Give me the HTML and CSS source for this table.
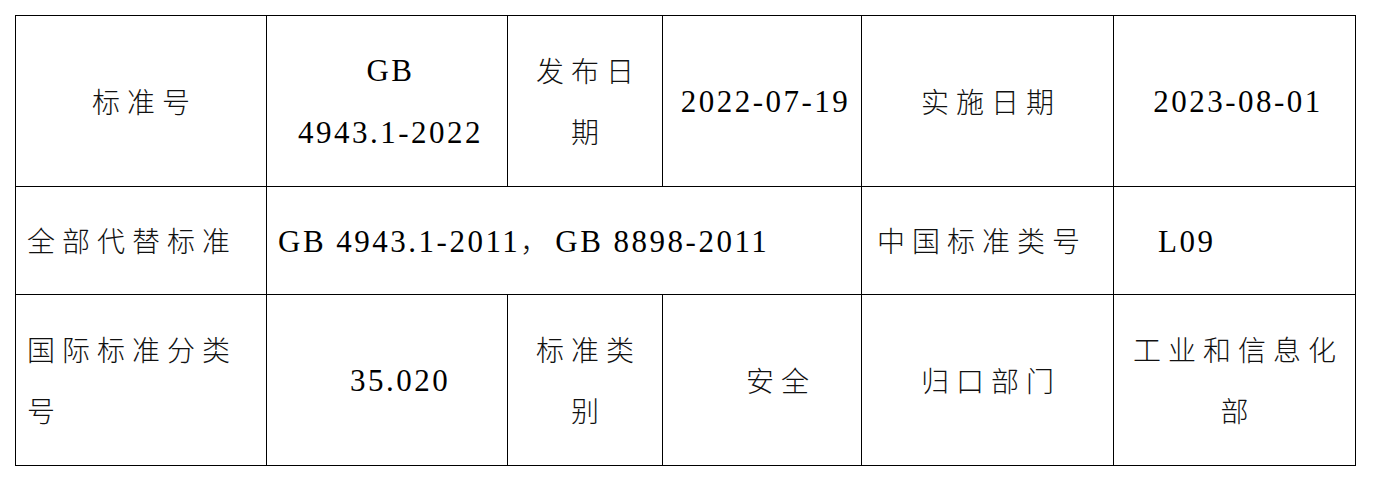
FILE: index.html
```html
<!DOCTYPE html>
<html lang="zh-CN">
<head>
<meta charset="utf-8">
<title>标准信息</title>
<link rel="stylesheet" href="styles.css">
</head>
<body>
<table class="info">
  <colgroup>
    <col class="c1"><col class="c2"><col class="c3"><col class="c4"><col class="c5"><col class="c6">
  </colgroup>
  <tr class="r1">
    <td class="center">标准号</td>
    <td class="center"><span class="num">GB</span><br><span class="num">4943.1-2022</span></td>
    <td class="center">发布日<br>期</td>
    <td class="center"><span class="num">2022-07-19</span></td>
    <td class="center">实施日期</td>
    <td class="center"><span class="num">2023-08-01</span></td>
  </tr>
  <tr class="r2">
    <td class="left">全部代替标准</td>
    <td class="left" colspan="3"><span class="num">GB 4943.1-2011</span>，<span class="num">GB 8898-2011</span></td>
    <td class="left wide">中国标准类号</td>
    <td class="left indent"><span class="num">L09</span></td>
  </tr>
  <tr class="r3">
    <td class="left">国际标准分类<br>号</td>
    <td class="left indent2"><span class="num">35.020</span></td>
    <td class="center">标准类<br>别</td>
    <td class="left indent2">安全</td>
    <td class="center">归口部门</td>
    <td class="center">工业和信息化<br>部</td>
  </tr>
</table>
</body>
</html>
```
FILE: styles.css
```css
html, body {
  margin: 0;
  padding: 0;
  background: #fff;
}
body {
  padding: 15px 0 0 15px;
}
.info {
  border-collapse: collapse;
  table-layout: fixed;
  width: 1340px;
  font-family: "Noto Sans CJK SC", "Noto Sans", sans-serif;
  font-weight: 300;
  font-size: 28px;
  letter-spacing: 7px;
  line-height: 61px;
  color: #111;
}
.c1 { width: 251px; }
.c2 { width: 241px; }
.c3 { width: 155px; }
.c4 { width: 199px; }
.c5 { width: 252px; }
.c6 { width: 242px; }
.info td {
  border: 1px solid #000;
  padding: 0 0 0 11px;
  vertical-align: middle;
  white-space: nowrap;
  overflow: hidden;
}
.r1 { height: 171px; }
.r2 { height: 108px; }
.r3 { height: 171px; }
.info td.center {
  text-align: center;
  padding: 0 0 0 7px;
}
.info td.left { text-align: left; }
.info td.wide { padding-left: 15px; }
.info td.indent { padding-left: 44px; }
.info td.indent2 { padding-left: 83px; }
.num {
  font-family: "Liberation Serif", "Times New Roman", serif;
  font-weight: 400;
  font-size: 31px;
  letter-spacing: 2.5px;
  color: #000;
}
```
